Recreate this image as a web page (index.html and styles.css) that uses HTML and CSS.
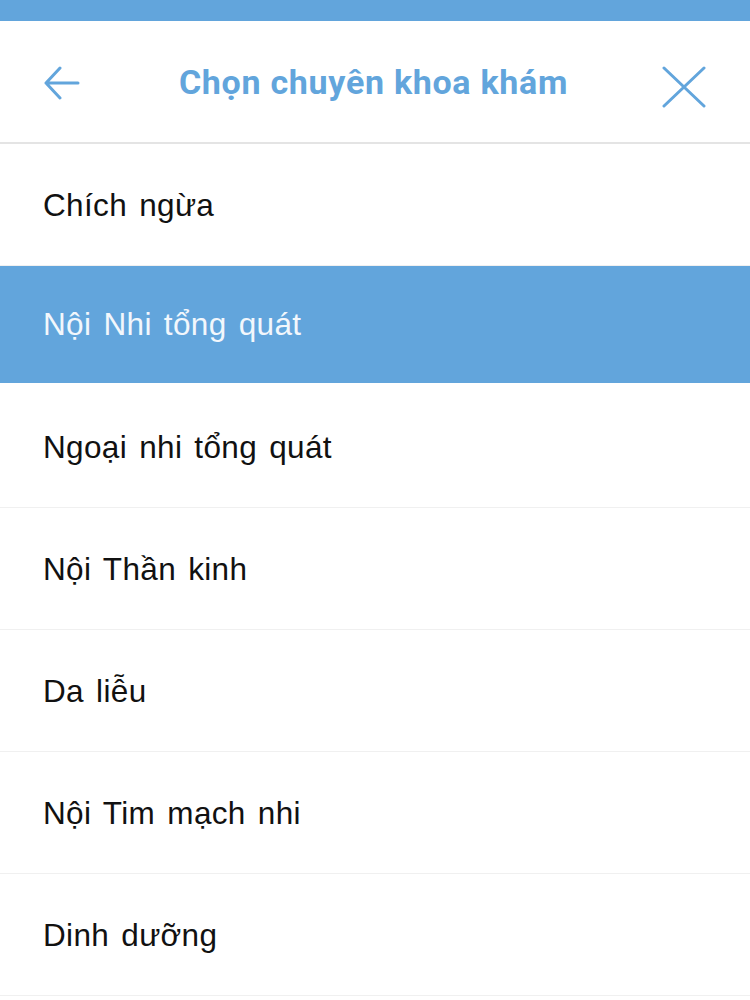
FILE: index.html
```html
<!DOCTYPE html>
<html lang="vi">
<head>
<meta charset="utf-8">
<link rel="stylesheet" href="styles.css">
</head>
<body>
<div class="statusbar"></div>
<header class="header">
  <button class="icon-btn back" aria-label="Quay lại">
    <svg width="38" height="34" viewBox="0 0 38 34"><path d="M17 2 L3 17 L17 32 M3 17 H35" fill="none" stroke="#62a5dc" stroke-width="3" stroke-linecap="round" stroke-linejoin="round"/></svg>
  </button>
  <h1 class="title">Chọn chuyên khoa khám</h1>
  <button class="icon-btn close" aria-label="Đóng">
    <svg width="44" height="42" viewBox="0 0 44 42"><path d="M2 2 L42 40 M42 2 L2 40" fill="none" stroke="#62a5dc" stroke-width="3" stroke-linecap="round"/></svg>
  </button>
</header>
<ul class="list">
  <li class="item">Chích ngừa</li>
  <li class="item selected">Nội Nhi tổng quát</li>
  <li class="item">Ngoại nhi tổng quát</li>
  <li class="item">Nội Thần kinh</li>
  <li class="item">Da liễu</li>
  <li class="item">Nội Tim mạch nhi</li>
  <li class="item">Dinh dưỡng</li>
</ul>
</body>
</html>
```
FILE: styles.css
```css
* { box-sizing: border-box; }
html, body { margin: 0; padding: 0; background: #fff; }
body { font-family: "Liberation Sans", Arial, sans-serif; width: 750px; overflow: hidden; }
.statusbar { height: 21px; background: #62a5dc; }
.header {
  height: 123px;
  display: flex;
  align-items: center;
  justify-content: space-between;
  padding: 0 44px 0 43px;
  border-bottom: 2px solid #e4e4e4;
}
.icon-btn { background: none; border: 0; padding: 0; display: flex; }
.back { margin-top: 2px; }
.close { margin-top: 10px; }
.title {
  margin: 0 0 0 4px;
  font-family: Roboto, "Liberation Sans", sans-serif;
  font-weight: 700;
  font-size: 34px;
  color: #62a5dc;
  letter-spacing: 0.7px;
}
.list { list-style: none; margin: 0; padding: 0; }
.item {
  height: 122px;
  display: flex;
  align-items: center;
  padding: 2px 0 0 43px;
  font-size: 31.5px;
  letter-spacing: 0.35px;
  word-spacing: 3px;
  color: #111;
  border-bottom: 1px solid #f0f0f0;
}
.item.selected { background: #62a5dc; color: #f2f7fc; height: 120px; padding-top: 0; border-bottom: 3px solid #fff; }
```
